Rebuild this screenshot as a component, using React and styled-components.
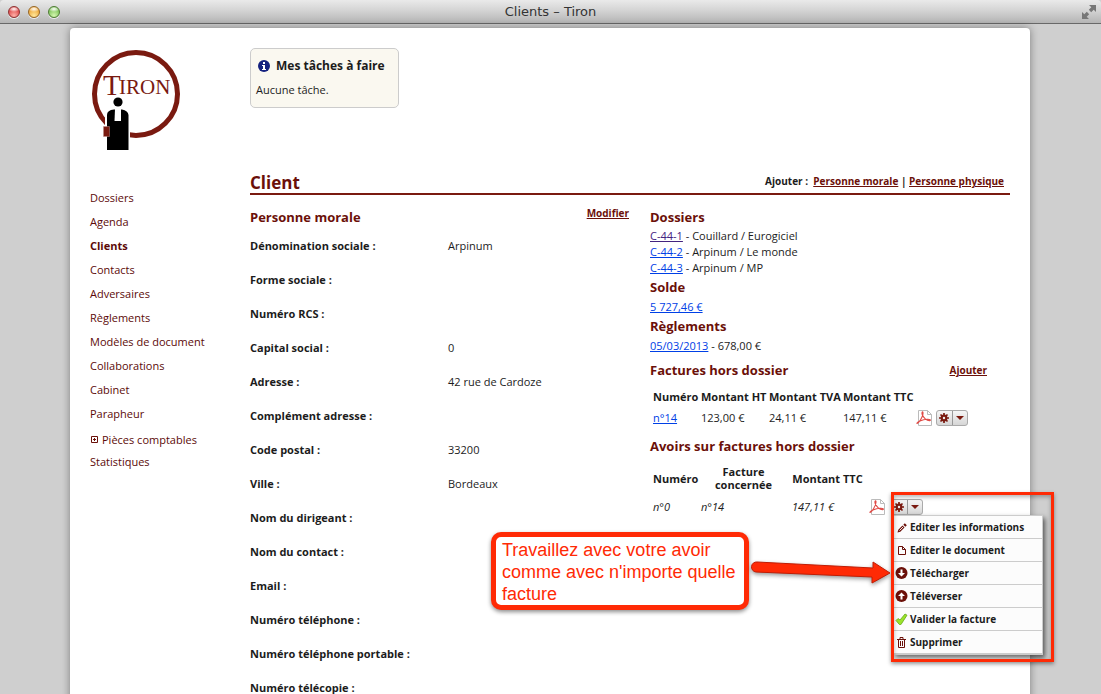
import React from "react";
import styled, { createGlobalStyle } from "styled-components";

const BRAND = "#6b1009";
const NAV = "#5c0a08";
const RING = "#7a1a10";
const ALERT = "#ff2a05";

const GlobalStyle = createGlobalStyle`
  * { box-sizing: border-box; }
  body { margin: 0; background: #cfcfcf; }
  body, button {
    font-family: "Open Sans", "Noto Sans", sans-serif;
    font-size: 11px;
    line-height: 16px;
    color: #1c1c1c;
  }
  h1, h2, p, ul, dl, dd { margin: 0; padding: 0; }
  ul { list-style: none; }
  svg { display: block; flex: none; }
`;

const Window = styled.div`
  height: 100vh;
  display: flex;
  flex-direction: column;
  overflow: hidden;
`;

const TitleBar = styled.header`
  flex: none;
  height: 24px;
  padding: 0 4px;
  display: grid;
  grid-template-columns: 1fr auto 1fr;
  align-items: center;
  background: linear-gradient(#eaeaea, #d4d4d4 45%, #b4b4b4);
  border-bottom: 1px solid #686868;
  border-radius: 4px 4px 0 0;
`;

const WindowTitle = styled.div`
  font-family: "DejaVu Sans", sans-serif;
  font-size: 13px;
  color: #333;
`;

const Lights = styled.div`
  display: flex;
  gap: 8px;
  padding-left: 4px;
`;

const Light = styled.button`
  width: 12px;
  height: 12px;
  padding: 0;
  border: 1px solid ${(p) => p.$edge};
  border-radius: 50%;
  background: radial-gradient(ellipse 60% 30% at 50% 20%, #fff, transparent),
    radial-gradient(circle at 50% 85%, ${(p) => p.$glow}, ${(p) => p.$tone} 70%);
  box-shadow: 0 1px 0 #eee;
`;

const Expand = styled.button`
  justify-self: end;
  padding: 0;
  border: 0;
  background: none;
`;

const Viewport = styled.div`
  flex: 1;
  min-height: 0;
  padding: 4px 71px 0 70px;
`;

const Page = styled.div`
  min-height: 100%;
  padding: 20px;
  display: grid;
  grid-template-columns: 160px 1fr;
  background: #fff;
  border-radius: 4px;
  box-shadow: 0 0 8px rgba(0, 0, 0, 0.4);
`;

const NavList = styled.ul`
  margin-top: 36px;
`;

const NavItem = styled.li`
  display: flex;
  align-items: center;
  line-height: ${(p) => p.$line || 24}px;
`;

const NavLink = styled.a`
  color: ${NAV};
  text-decoration: none;
  font-weight: ${(p) => (p.$active ? 700 : 400)};
`;

const TaskBox = styled.section`
  width: 149px;
  padding: 5px 5px 9px;
  border: 1px solid #ccc;
  border-radius: 5px;
  background: #faf8f0;
`;

const TaskTitle = styled.h2`
  display: flex;
  align-items: center;
  gap: 6px;
  margin: 0 0 4px 2px;
  font-size: 12px;
  line-height: 24px;
  white-space: nowrap;
`;

const PageHead = styled.div`
  display: flex;
  justify-content: space-between;
  align-items: flex-start;
  margin-top: 65px;
  padding-right: 6px;
  border-bottom: 2px solid ${RING};
`;

const PageTitle = styled.h1`
  font-size: 17px;
  line-height: 20px;
  color: ${BRAND};
`;

const Actions = styled.div`
  font-size: 10px;
  font-weight: 700;
  white-space: pre;
`;

const ActionLink = styled.a`
  color: ${BRAND};
  font-size: 10px;
  font-weight: 700;
`;

const Columns = styled.div`
  display: grid;
  grid-template-columns: 1fr 360px;
  column-gap: 21px;
`;

const ClientPane = styled.section`
  padding-top: 10px;
`;

const RelatedPane = styled.section`
  padding-top: 14px;
`;

const SectionHead = styled.div`
  display: flex;
  justify-content: space-between;
  padding-right: ${(p) => p.$inset || 0}px;
  margin-top: ${(p) => p.$space || 0}px;
`;

const SectionTitle = styled.h2`
  font-size: 13px;
  line-height: ${(p) => p.$line || 16}px;
  color: ${BRAND};
  white-space: nowrap;
`;

const Fields = styled.dl`
  display: grid;
  grid-template-columns: 198px 1fr;
  line-height: 34px;
`;

const FieldName = styled.dt`
  font-weight: 700;
`;

const Lines = styled.ul`
  padding: ${(p) => p.$pad || 3}px 0 3px;
`;

const DataLink = styled.a`
  color: ${(p) => (p.$seen ? "#43237f" : "#0040e6")};
`;

const Table = styled.table`
  width: 100%;
  table-layout: fixed;
  border-collapse: collapse;
  margin: ${(p) => p.$top}px 0 12px;
`;

const HeadCell = styled.th`
  padding: 0 0 0 ${(p) => (p.$center ? 0 : 3)}px;
  text-align: ${(p) => (p.$center ? "center" : "left")};
  line-height: ${(p) => p.$line || 16}px;
  white-space: nowrap;
`;

const Cell = styled.td`
  padding: ${(p) => p.$top || 5}px 0 0 3px;
  font-style: ${(p) => (p.$italic ? "italic" : "normal")};
  white-space: nowrap;
`;

const Tools = styled.div`
  display: flex;
  gap: ${(p) => p.$gap}px;
  height: 16px;
`;

const IconLink = styled.a`
  display: block;
`;

const MenuAnchor = styled.div`
  position: relative;
`;

const SplitButton = styled.div`
  display: flex;
  width: 32px;
  height: 16px;
  border: 1px solid #aaa;
  border-radius: 3px;
  background: linear-gradient(#f6f6f6, #d6d6d6);
  overflow: hidden;
`;

const SplitPart = styled.button`
  flex: 1;
  display: flex;
  align-items: center;
  justify-content: center;
  padding: 0;
  border: 0;
  background: none;
  & + & { border-left: 1px solid #999; }
`;

const Menu = styled.ul`
  position: absolute;
  top: 16px;
  left: 2px;
  width: 150px;
  background: #fcfcfc;
  border: 1px solid #ccc;
  box-shadow: 2px 3px 5px rgba(0, 0, 0, 0.6);
`;

const MenuButton = styled.button`
  display: flex;
  align-items: center;
  gap: 2px;
  width: 100%;
  height: 23px;
  padding: 0 0 0 1px;
  border: 0;
  border-bottom: 1px solid #ccc;
  background: none;
  font-size: 10px;
  font-weight: 700;
  white-space: nowrap;
`;

const Highlight = styled.div`
  position: absolute;
  top: -7px;
  left: 0;
  width: 163px;
  height: 170px;
  border: 3px solid ${ALERT};
  box-shadow: 0 2px 4px rgba(0, 0, 0, 0.4), inset 0 2px 4px rgba(0, 0, 0, 0.3);
  pointer-events: none;
`;

const Callout = styled.p`
  position: absolute;
  top: 33px;
  right: 174px;
  width: 258px;
  padding: 2px 0 0 6px;
  border: 5px solid ${ALERT};
  border-radius: 10px;
  background: #fff;
  box-shadow: 0 2px 4px rgba(0, 0, 0, 0.45);
  font-family: "Liberation Sans", Arial, sans-serif;
  font-size: 18px;
  font-style: normal;
  line-height: 22px;
  white-space: normal;
  color: ${ALERT};
`;

const Pointer = styled.svg`
  position: absolute;
  top: 58px;
  right: 32px;
  overflow: visible;
  filter: drop-shadow(0 2px 2px rgba(0, 0, 0, 0.4));
`;

const Logo = () => (
  <svg width="92" height="102" viewBox="90 48 92 102" role="img" aria-label="Tiron">
    <circle cx="136" cy="94" r="41.5" fill="none" stroke={RING} strokeWidth="5" />
    <g fill={RING} fontFamily="Liberation Serif, serif">
      <text x="103" y="95" fontSize="29">T</text>
      <text x="119" y="94" fontSize="21">IRON</text>
    </g>
    <path d="M105 150V115q1-5 7-6h10q6 1 8 6v35z" fill="#fff" />
    <circle cx="118" cy="102" r="4.6" />
    <path d="M107 150V115q0-5 7-5.500h8q6 1 6.500 5.500v35z" />
    <path d="M115 109h6v12h-6.500z" fill="#fff" />
    <path d="M103.500 126.500h6v10h-6z" fill={RING} stroke="#b98a85" strokeWidth=".5" />
  </svg>
);

const ExpandIcon = () => (
  <svg width="16" height="16" viewBox="0 0 16 16" fill="#777">
    <path d="M8 1h7v7l-2.300-2.300-2.500 2.500-2.400-2.400 2.500-2.500z" />
    <path d="M1 8l2.300 2.300 2.500-2.500 2.400 2.400-2.500 2.500L8 15H1z" />
  </svg>
);

const InfoIcon = () => (
  <svg width="12" height="12" viewBox="0 0 12 12">
    <circle cx="6" cy="6" r="6" fill="#14217f" />
    <path d="M5 2h2v2H5zM4 5h3v4h1v1H4V9h1V6H4z" fill="#fff" />
  </svg>
);

const PlusIcon = () => (
  <svg width="12" height="8" viewBox="0 0 12 8">
    <path d="M1.500.5h6v6h-6z" fill="none" stroke={BRAND} />
    <path d="M4 2h1v1h1v1H5v1H4V4H3V3h1z" fill={BRAND} />
  </svg>
);

const PdfIcon = () => (
  <svg width="16" height="16" viewBox="0 0 16 16" fill="none">
    <path d="M2.500.5h9l4 4v11h-13z" fill="#fff" stroke="#bbb" />
    <path d="M11.500.5v4h4" stroke="#bbb" />
    <path d="M.8 13.200c1.200 1.400 6.700-7 6.200-10.700-.3-1.500-1.600-.6-.8 2 1.100 3.200 4.500 6.400 7.600 6.200 1.600-.4.300-1.900-3.300-1.400-3.800.4-8.600 2.300-9.700 3.900z" stroke="#e04a45" strokeWidth="1.100" />
  </svg>
);

const GearIcon = () => (
  <svg width="10" height="10" viewBox="0 0 10 10">
    <g stroke={RING} strokeWidth="1.700">
      <path d="M5 0v10M0 5h10M1.500 1.500l7 7M8.500 1.500l-7 7" />
    </g>
    <circle cx="5" cy="5" r="3.400" fill={RING} />
    <circle cx="5" cy="5" r="1.200" fill="#eee" />
  </svg>
);

const CaretIcon = () => (
  <svg width="8" height="4" viewBox="0 0 8 4">
    <path d="M0 0h8L4 4z" fill={RING} />
  </svg>
);

const PencilIcon = () => (
  <svg width="13" height="12" viewBox="0 0 13 12">
    <path d="M2.500 11.500l.8-2.800L7.500 4.500l2 2-4.200 4.200z" fill={BRAND} />
    <path d="M4.500 9.500l3.500-3.500" stroke="#fff" strokeWidth=".9" />
    <path d="M8.300 3.700L9.800 2.200l2 2-1.500 1.500z" fill={BRAND} />
  </svg>
);

const DocumentIcon = () => (
  <svg width="13" height="12" viewBox="0 0 13 12" fill="none" stroke={BRAND}>
    <path d="M3.500 2.500h4l3 3v5h-7zM7.500 2.500v3h3" />
  </svg>
);

const CircleArrowIcon = ({ up }) => (
  <svg width="13" height="12" viewBox="0 0 13 12">
    <circle cx="6.500" cy="6" r="6" fill={BRAND} />
    <path
      d={up ? "M6.500 2.500l3.500 3.500H7.500v3.500h-2V6H3z" : "M6.500 9.500l3.500-3.500H7.500V2.500h-2V6H3z"}
      fill="#fff"
    />
  </svg>
);

const CheckIcon = () => (
  <svg width="13" height="12" viewBox="0 0 13 12">
    <path d="M1 7.500l2-2 2 1.500 5-6 2 1.200-6 9.300q-1 .6-1.600 0z" fill="#9be32b" stroke="#65a817" strokeWidth=".8" />
  </svg>
);

const TrashIcon = () => (
  <svg width="13" height="12" viewBox="0 0 13 12" fill="none" stroke={BRAND}>
    <path d="M2 3.500h9M5 3V1.500h3V3M3.500 4v7.500h6V4M5.500 5v5M7.500 5v5" />
  </svg>
);

const navigation = [
  { label: "Dossiers" },
  { label: "Agenda" },
  { label: "Clients", active: true },
  { label: "Contacts" },
  { label: "Adversaires" },
  { label: "Règlements" },
  { label: "Modèles de document" },
  { label: "Collaborations" },
  { label: "Cabinet" },
  { label: "Parapheur" },
  { label: "Pièces comptables", line: 28, expandable: true },
  { label: "Statistiques", line: 16 },
];

const fields = [
  ["Dénomination sociale :", "Arpinum"],
  ["Forme sociale :", ""],
  ["Numéro RCS :", ""],
  ["Capital social :", "0"],
  ["Adresse :", "42 rue de Cardoze"],
  ["Complément adresse :", ""],
  ["Code postal :", "33200"],
  ["Ville :", "Bordeaux"],
  ["Nom du dirigeant :", ""],
  ["Nom du contact :", ""],
  ["Email :", ""],
  ["Numéro téléphone :", ""],
  ["Numéro téléphone portable :", ""],
  ["Numéro télécopie :", ""],
];

const cases = [
  ["C-44-1", "Couillard / Eurogiciel", true],
  ["C-44-2", "Arpinum / Le monde", false],
  ["C-44-3", "Arpinum / MP", false],
];

const menuItems = [
  ["Editer les informations", <PencilIcon />],
  ["Editer le document", <DocumentIcon />],
  ["Télécharger", <CircleArrowIcon />],
  ["Téléverser", <CircleArrowIcon up />],
  ["Valider la facture", <CheckIcon />],
  ["Supprimer", <TrashIcon />],
];

const ActionButton = () => (
  <SplitButton>
    <SplitPart aria-label="Options"><GearIcon /></SplitPart>
    <SplitPart aria-label="Ouvrir le menu"><CaretIcon /></SplitPart>
  </SplitButton>
);

export default function App() {
  return (
    <Window>
      <GlobalStyle />
      <TitleBar>
        <Lights>
          <Light aria-label="Fermer" $edge="#8d3030" $tone="#dd4747" $glow="#ffb0a8" />
          <Light aria-label="Réduire" $edge="#966523" $tone="#eda637" $glow="#ffe79a" />
          <Light aria-label="Agrandir" $edge="#4d7b33" $tone="#7dc257" $glow="#d4f7b0" />
        </Lights>
        <WindowTitle>Clients – Tiron</WindowTitle>
        <Expand aria-label="Plein écran"><ExpandIcon /></Expand>
      </TitleBar>
      <Viewport>
        <Page>
          <nav>
            <Logo />
            <NavList>
              {navigation.map((item) => (
                <NavItem key={item.label} $line={item.line}>
                  {item.expandable && <PlusIcon />}
                  <NavLink href="#" $active={item.active}>{item.label}</NavLink>
                </NavItem>
              ))}
            </NavList>
          </nav>
          <main>
            <TaskBox>
              <TaskTitle><InfoIcon />Mes tâches à faire</TaskTitle>
              <p>Aucune tâche.</p>
            </TaskBox>
            <PageHead>
              <PageTitle>Client</PageTitle>
              <Actions>
                {"Ajouter :  "}
                <ActionLink href="#">Personne morale</ActionLink>
                {" | "}
                <ActionLink href="#">Personne physique</ActionLink>
              </Actions>
            </PageHead>
            <Columns>
              <ClientPane>
                <SectionHead>
                  <SectionTitle $line={24}>Personne morale</SectionTitle>
                  <ActionLink href="#">Modifier</ActionLink>
                </SectionHead>
                <Fields>
                  {fields.map(([name, value]) => (
                    <React.Fragment key={name}>
                      <FieldName>{name}</FieldName>
                      <dd>{value}</dd>
                    </React.Fragment>
                  ))}
                </Fields>
              </ClientPane>
              <RelatedPane>
                <SectionTitle>Dossiers</SectionTitle>
                <Lines>
                  {cases.map(([code, parties, seen]) => (
                    <li key={code}>
                      <DataLink href="#" $seen={seen}>{code}</DataLink> - {parties}
                    </li>
                  ))}
                </Lines>
                <SectionTitle>Solde</SectionTitle>
                <Lines $pad={4}>
                  <li><DataLink href="#">5 727,46 €</DataLink></li>
                </Lines>
                <SectionTitle>Règlements</SectionTitle>
                <Lines $pad={4}>
                  <li><DataLink href="#">05/03/2013</DataLink> - 678,00 €</li>
                </Lines>
                <SectionHead $inset={23} $space={5}>
                  <SectionTitle>Factures hors dossier</SectionTitle>
                  <ActionLink href="#">Ajouter</ActionLink>
                </SectionHead>
                <Table $top={11}>
                  <colgroup>
                    <col width="48" /><col width="68" /><col width="74" /><col width="73" /><col />
                  </colgroup>
                  <thead>
                    <tr>
                      <HeadCell>Numéro</HeadCell>
                      <HeadCell>Montant HT</HeadCell>
                      <HeadCell>Montant TVA</HeadCell>
                      <HeadCell>Montant TTC</HeadCell>
                      <HeadCell aria-label="Actions" />
                    </tr>
                  </thead>
                  <tbody>
                    <tr>
                      <Cell><DataLink href="#">n°14</DataLink></Cell>
                      <Cell>123,00 €</Cell>
                      <Cell>24,11 €</Cell>
                      <Cell>147,11 €</Cell>
                      <Cell>
                        <Tools $gap={4}>
                          <IconLink href="#" aria-label="PDF"><PdfIcon /></IconLink>
                          <ActionButton />
                        </Tools>
                      </Cell>
                    </tr>
                  </tbody>
                </Table>
                <SectionTitle>Avoirs sur factures hors dossier</SectionTitle>
                <Table $top={11}>
                  <colgroup>
                    <col width="48" /><col width="91" /><col width="77" /><col />
                  </colgroup>
                  <thead>
                    <tr>
                      <HeadCell $line={13}>Numéro</HeadCell>
                      <HeadCell $line={13} $center>Facture<br />concernée</HeadCell>
                      <HeadCell $line={13} $center>Montant TTC</HeadCell>
                      <HeadCell aria-label="Actions" />
                    </tr>
                  </thead>
                  <tbody>
                    <tr>
                      <Cell $top={8} $italic>n°0</Cell>
                      <Cell $top={8} $italic>n°14</Cell>
                      <Cell $top={8} $italic>147,11 €</Cell>
                      <Cell $top={8}>
                        <Tools $gap={6}>
                          <IconLink href="#" aria-label="PDF"><PdfIcon /></IconLink>
                          <MenuAnchor>
                            <ActionButton />
                            <Menu>
                              {menuItems.map(([label, icon]) => (
                                <li key={label}>
                                  <MenuButton>{icon}{label}</MenuButton>
                                </li>
                              ))}
                            </Menu>
                            <Highlight />
                            <Callout>Travaillez avec votre avoir comme avec n'importe quelle facture</Callout>
                            <Pointer width="140" height="28" viewBox="0 0 140 28">
                              <path
                                d="M6 5L122 11V5L139 16 121 26V20L5 15A5 5 0 0 1 6 5z"
                                fill={ALERT}
                                stroke="#c01c04"
                              />
                            </Pointer>
                          </MenuAnchor>
                        </Tools>
                      </Cell>
                    </tr>
                  </tbody>
                </Table>
              </RelatedPane>
            </Columns>
          </main>
        </Page>
      </Viewport>
    </Window>
  );
}
